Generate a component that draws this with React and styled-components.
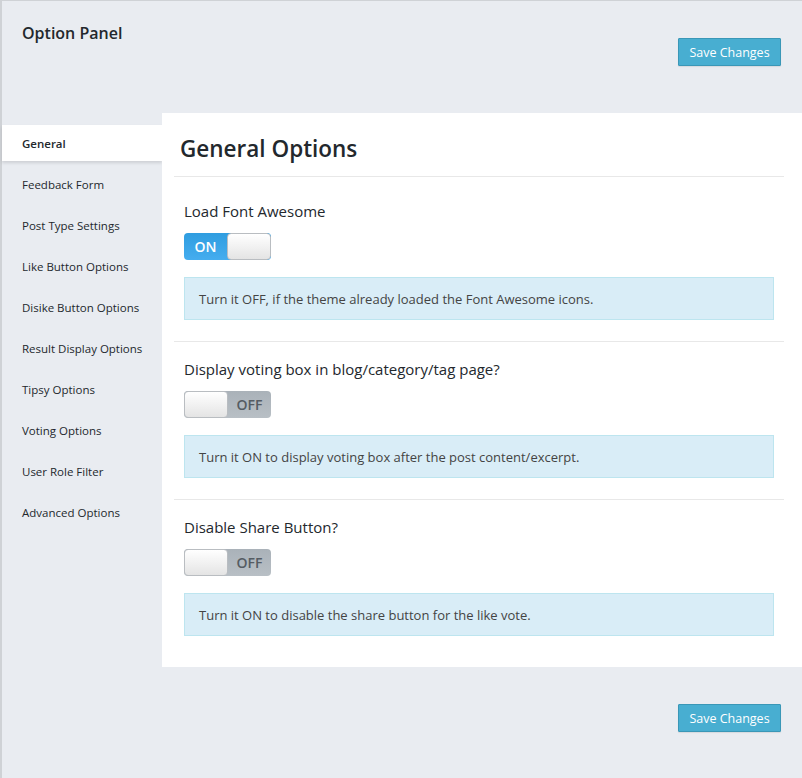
import React from 'react';
import styled, { createGlobalStyle } from 'styled-components';

const GlobalStyle = createGlobalStyle`
  html, body {
    margin: 0;
    padding: 0;
    background: #e9ecf1;
  }
  body {
    font-family: 'Open Sans', 'Noto Sans', sans-serif;
    color: #23282d;
  }
`;

const Page = styled.div`
  box-sizing: border-box;
  width: 802px;
  min-height: 778px;
  background: #e9ecf1;
  border-top: 1px solid #cfd2d6;
  border-left: 2px solid #cfd2d6;
`;

const Header = styled.div`
  display: flex;
  justify-content: space-between;
  align-items: flex-start;
  height: 112px;
  padding: 21px 21px 0 20px;
  box-sizing: border-box;
`;

const Title = styled.h1`
  margin: 0;
  font-size: 16px;
  line-height: 22px;
  font-weight: 600;
  color: #23282d;
`;

const SaveButton = styled.button`
  box-sizing: border-box;
  width: 103px;
  height: 28px;
  margin-top: ${(p) => p.$top || 0}px;
  padding: 0;
  background: #48aed1;
  border: 1px solid #3a97b7;
  border-radius: 1px;
  box-shadow: 0 1px 1px rgba(0, 0, 0, 0.08);
  color: #fff;
  font-family: 'Open Sans', 'Noto Sans', sans-serif;
  font-size: 12.5px;
  cursor: pointer;
`;

const Main = styled.div`
  display: flex;
  align-items: flex-start;
`;

const Sidebar = styled.ul`
  list-style: none;
  margin: 0;
  padding: 12px 0 0;
  width: 160px;
  flex-shrink: 0;
`;

const NavItem = styled.li`
  height: 36px;
  margin-bottom: 5px;
  padding-left: 20px;
  display: flex;
  align-items: center;
  font-size: 11.5px;
  font-weight: ${(p) => (p.$active ? 600 : 400)};
  color: #23282d;
  background: ${(p) => (p.$active ? '#fff' : 'transparent')};
  box-shadow: ${(p) => (p.$active ? '0 2px 3px rgba(0,0,0,0.12)' : 'none')};
  cursor: pointer;
`;

const Panel = styled.div`
  flex: 1;
  background: #fff;
  padding: 0 18px 0 12px;
`;

const PanelTitle = styled.h2`
  margin: 0;
  padding: 21px 6px 12px;
  font-size: 22.5px;
  line-height: 30px;
  font-weight: 600;
  color: #23282d;
  border-bottom: 1px solid #e8e8e8;
`;

const Section = styled.div`
  padding: ${(p) => (p.$first ? 24 : 17)}px 10px ${(p) => (p.$last ? 31 : 21)}px;
  border-bottom: ${(p) => (p.$last ? 'none' : '1px solid #e8e8e8')};
`;

const SectionTitle = styled.div`
  font-size: 15px;
  line-height: 20px;
  font-weight: 500;
  color: #23282d;
  margin-bottom: 12px;
`;

const Switch = styled.div`
  box-sizing: border-box;
  display: flex;
  flex-direction: ${(p) => (p.$on ? 'row' : 'row-reverse')};
  width: 87px;
  height: 27px;
  border-radius: 4px;
  overflow: hidden;
  background: ${(p) =>
    p.$on ? 'linear-gradient(#2f9de0, #45adef)' : 'linear-gradient(#aab2b9, #b8bfc5)'};
  cursor: pointer;
`;

const SwitchLabel = styled.span`
  flex: 1;
  display: flex;
  align-items: center;
  justify-content: center;
  font-size: 14px;
  font-weight: 600;
  color: ${(p) => (p.$on ? '#fff' : '#555c63')};
`;

const Knob = styled.span`
  box-sizing: border-box;
  width: 44px;
  height: 27px;
  border: 1px solid #b9bdc1;
  border-radius: 4px;
  background: linear-gradient(#ffffff, #e4e4e4);
`;

const Info = styled.div`
  margin-top: 17px;
  box-sizing: border-box;
  height: 43px;
  padding: 0 14px;
  display: flex;
  align-items: center;
  background: #d9edf7;
  border: 1px solid #bde5ef;
  font-size: 13px;
  color: #444;
`;

const Footer = styled.div`
  display: flex;
  justify-content: flex-end;
  padding: 37px 21px 46px 0;
`;

const navItems = [
  'General',
  'Feedback Form',
  'Post Type Settings',
  'Like Button Options',
  'Disike Button Options',
  'Result Display Options',
  'Tipsy Options',
  'Voting Options',
  'User Role Filter',
  'Advanced Options',
];

const options = [
  {
    title: 'Load Font Awesome',
    on: true,
    info: 'Turn it OFF, if the theme already loaded the Font Awesome icons.',
  },
  {
    title: 'Display voting box in blog/category/tag page?',
    on: false,
    info: 'Turn it ON to display voting box after the post content/excerpt.',
  },
  {
    title: 'Disable Share Button?',
    on: false,
    info: 'Turn it ON to disable the share button for the like vote.',
  },
];

const Toggle = ({ on }) => (
  <Switch $on={on}>
    <SwitchLabel $on={on}>{on ? 'ON' : 'OFF'}</SwitchLabel>
    <Knob />
  </Switch>
);

const App = () => {
  return (
    <Page>
      <GlobalStyle />
      <Header>
        <Title>Option Panel</Title>
        <SaveButton $top={16}>Save Changes</SaveButton>
      </Header>
      <Main>
        <Sidebar>
          {navItems.map((item, i) => (
            <NavItem key={item} $active={i === 0}>
              {item}
            </NavItem>
          ))}
        </Sidebar>
        <Panel>
          <PanelTitle>General Options</PanelTitle>
          {options.map((opt, i) => (
            <Section key={opt.title} $first={i === 0} $last={i === options.length - 1}>
              <SectionTitle>{opt.title}</SectionTitle>
              <Toggle on={opt.on} />
              <Info>{opt.info}</Info>
            </Section>
          ))}
        </Panel>
      </Main>
      <Footer>
        <SaveButton>Save Changes</SaveButton>
      </Footer>
    </Page>
  );
};

export default App;
